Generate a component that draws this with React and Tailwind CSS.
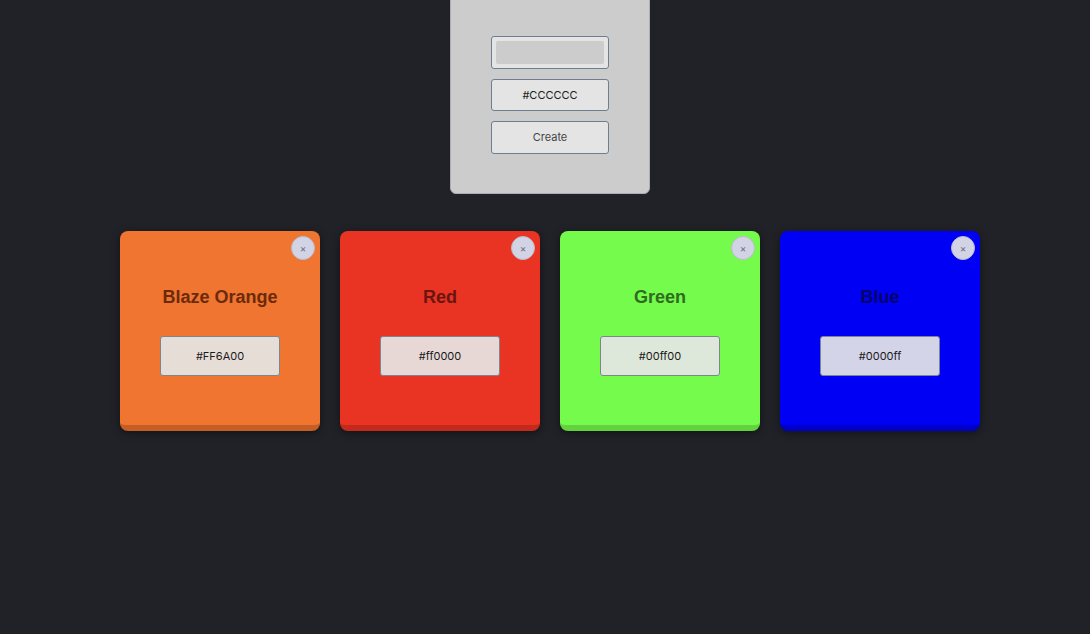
import { useState } from "react";

const initialColors = [
  { id: 1, name: "Blaze Orange", hex: "#FF6A00", bg: "bg-[#ef7530]", title: "text-[#6b2a0b]", base: "border-[#c45e24]" },
  { id: 2, name: "Red", hex: "#ff0000", bg: "bg-[#e93323]", title: "text-[#6a1510]", base: "border-[#c42a1c]" },
  { id: 3, name: "Green", hex: "#00ff00", bg: "bg-[#75fb4c]", title: "text-[#2f6b1e]", base: "border-[#62d23e]" },
  { id: 4, name: "Blue", hex: "#0000ff", bg: "bg-[#0000f5]", title: "text-[#05056a]", base: "border-[#0000c8]" },
];

const ColorCard = ({ color, onRemove }) => (
  <div className={`relative w-[200px] h-[200px] rounded-lg ${color.bg} border-b-[6px] ${color.base} shadow-[0_2px_8px_rgba(0,0,0,0.45)] flex flex-col items-center`}>
    <button
      onClick={() => onRemove(color.id)}
      className="absolute top-[5px] right-[5px] w-6 h-6 rounded-full bg-[#d2d3e4] border border-[#b9bbcc] text-[#6c6e80] text-[10px] leading-none flex items-center justify-center"
    >
      ×
    </button>
    <h2 className={`mt-[53px] text-[18px] font-bold ${color.title} font-['Liberation_Sans',Arial,sans-serif]`}>
      {color.name}
    </h2>
    <input
      readOnly
      value={color.hex}
      className="mt-[25px] w-[120px] h-[40px] rounded-[3px] border border-[#7e8591] bg-[#e6e6e6]/[0.92] text-center text-[11px] text-[#1a1a1a] font-['Inter',sans-serif] outline-none"
    />
  </div>
);

const App = () => {
  const [colors, setColors] = useState(initialColors);
  const [hex, setHex] = useState("#CCCCCC");

  const handleRemove = (id) => setColors(colors.filter((c) => c.id !== id));

  return (
    <div className="min-h-[634px] bg-[#212227] pl-[10px] font-['Inter',sans-serif]">
      <div className="flex justify-center">
        <div className="w-[200px] h-[200px] -mt-[6px] rounded-md bg-[#cccccc] border border-[#a9aeb6] flex flex-col items-center pt-[41px] gap-[10px]">
          <div className="w-[118px] h-[33px] rounded-[3px] border border-[#6f7e8f] bg-[#e4e4e4] p-[4px]">
            <div className="w-full h-full rounded-[2px] bg-[#cccccc]" />
          </div>
          <input
            value={hex}
            onChange={(e) => setHex(e.target.value)}
            className="w-[118px] h-[32px] rounded-[3px] border border-[#6f7e8f] bg-[#e4e4e4] text-center text-[11px] text-[#1a1a1a] outline-none"
          />
          <button className="w-[118px] h-[33px] rounded-[3px] border border-[#6f7e8f] bg-[#e4e4e4] text-[11px] text-[#444]">
            Create
          </button>
        </div>
      </div>

      <div className="flex justify-center gap-5 mt-[37px]">
        {colors.map((c) => (
          <ColorCard key={c.id} color={c} onRemove={handleRemove} />
        ))}
      </div>
    </div>
  );
};

export default App;
